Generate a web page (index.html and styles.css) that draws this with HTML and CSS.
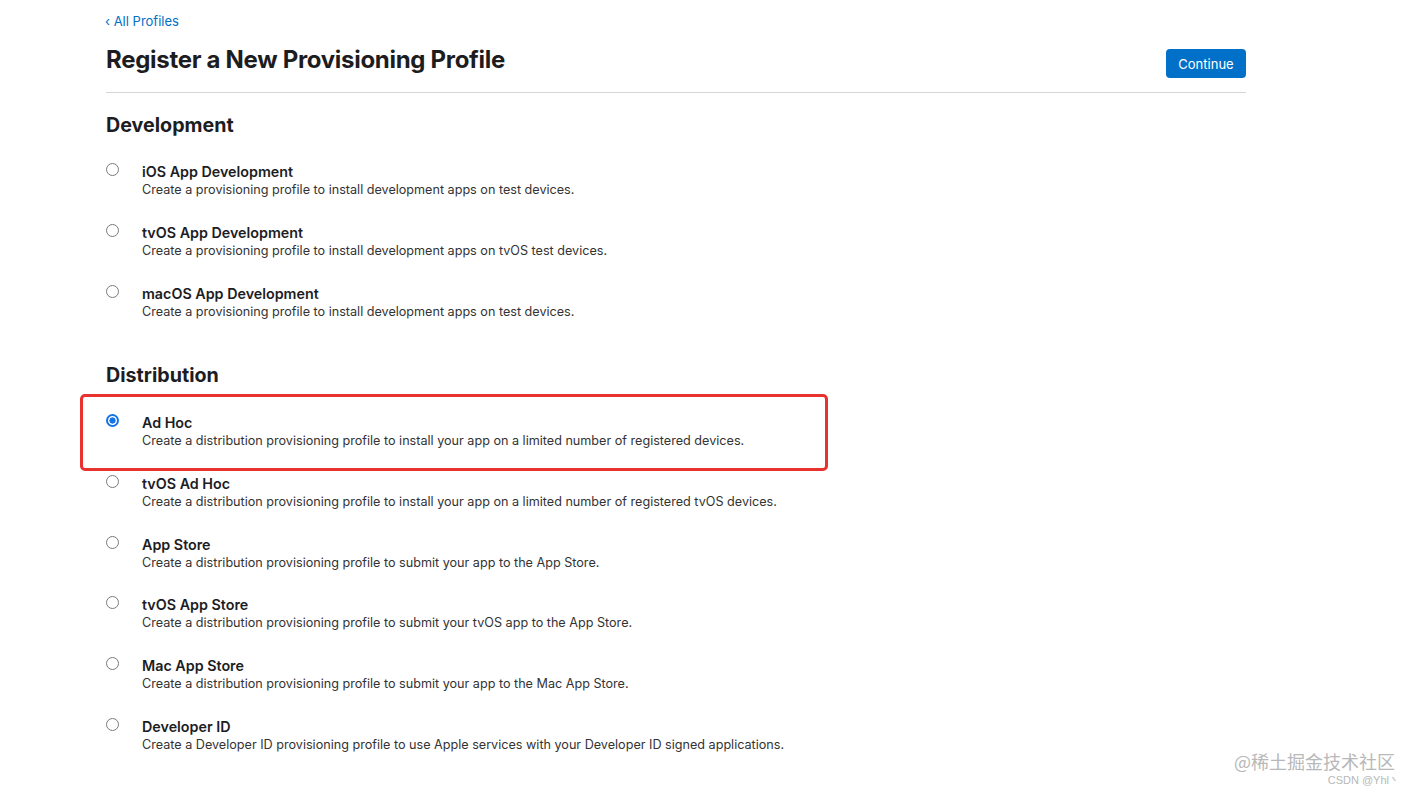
FILE: index.html
```html
<!DOCTYPE html>
<html>
<head>
<meta charset="utf-8">
<link rel="stylesheet" href="styles.css">
</head>
<body>
<div class="page">
  <a class="back" href="#">&lsaquo; All Profiles</a>
  <div class="header">
    <h1 class="title">Register a New Provisioning Profile</h1>
    <button class="btn">Continue</button>
  </div>

  <section class="section">
    <h2 class="sec-title">Development</h2>
    <div class="options">
      <div class="option">
        <span class="radio"></span>
        <div class="text">
          <div class="opt-title">iOS App Development</div>
          <div class="opt-desc">Create a provisioning profile to install development apps on test devices.</div>
        </div>
      </div>
      <div class="option">
        <span class="radio"></span>
        <div class="text">
          <div class="opt-title">tvOS App Development</div>
          <div class="opt-desc">Create a provisioning profile to install development apps on tvOS test devices.</div>
        </div>
      </div>
      <div class="option">
        <span class="radio"></span>
        <div class="text">
          <div class="opt-title">macOS App Development</div>
          <div class="opt-desc">Create a provisioning profile to install development apps on test devices.</div>
        </div>
      </div>
    </div>
  </section>

  <section class="section dist">
    <h2 class="sec-title">Distribution</h2>
    <div class="options">
      <div class="option highlighted">
        <span class="radio checked"></span>
        <div class="text">
          <div class="opt-title">Ad Hoc</div>
          <div class="opt-desc">Create a distribution provisioning profile to install your app on a limited number of registered devices.</div>
        </div>
        <span class="annot"></span>
      </div>
      <div class="option">
        <span class="radio"></span>
        <div class="text">
          <div class="opt-title">tvOS Ad Hoc</div>
          <div class="opt-desc">Create a distribution provisioning profile to install your app on a limited number of registered tvOS devices.</div>
        </div>
      </div>
      <div class="option">
        <span class="radio"></span>
        <div class="text">
          <div class="opt-title">App Store</div>
          <div class="opt-desc">Create a distribution provisioning profile to submit your app to the App Store.</div>
        </div>
      </div>
      <div class="option">
        <span class="radio"></span>
        <div class="text">
          <div class="opt-title">tvOS App Store</div>
          <div class="opt-desc">Create a distribution provisioning profile to submit your tvOS app to the App Store.</div>
        </div>
      </div>
      <div class="option">
        <span class="radio"></span>
        <div class="text">
          <div class="opt-title">Mac App Store</div>
          <div class="opt-desc">Create a distribution provisioning profile to submit your app to the Mac App Store.</div>
        </div>
      </div>
      <div class="option">
        <span class="radio"></span>
        <div class="text">
          <div class="opt-title">Developer ID</div>
          <div class="opt-desc">Create a Developer ID provisioning profile to use Apple services with your Developer ID signed applications.</div>
        </div>
      </div>
    </div>
  </section>
</div>

<div class="watermark">
  <div class="wm-main">@稀土掘金技术社区</div>
  <div class="wm-sub">CSDN @Yhl丶</div>
</div>
</body>
</html>
```

FILE: styles.css
```css
* { box-sizing: border-box; }
html, body { margin: 0; padding: 0; background: #fff; }
body {
  font-family: Inter, "Liberation Sans", Arial, sans-serif;
  color: #1d1d1f;
  height: 794px;
  overflow: hidden;
  position: relative;
}
.page {
  width: 1140px;
  margin-left: 106px;
  padding-top: 12px;
}
.back {
  display: block;
  font-size: 13px;
  line-height: 18px;
  color: #0070c9;
  text-decoration: none;
  margin-left: -1px;
}
.header {
  display: flex;
  justify-content: space-between;
  align-items: flex-start;
  margin-top: 15px;
  padding-bottom: 14px;
  border-bottom: 1px solid #d6d6d6;
}
.title {
  margin: 0;
  font-size: 24px;
  line-height: 30px;
  font-weight: 700;
  letter-spacing: -0.3px;
}
.btn {
  margin-top: 4px;
  height: 29px;
  width: 80px;
  border: 0;
  border-radius: 4px;
  background: #0070c9;
  color: #fff;
  font-family: inherit;
  font-size: 13px;
  padding: 0;
}
.section { margin-top: 20px; }
.section.dist { margin-top: 18px; }
.sec-title {
  margin: 0;
  font-size: 19.7px;
  line-height: 24px;
  font-weight: 700;
}
.options {
  margin-top: 25px;
  display: flex;
  flex-direction: column;
}
.dist .options { margin-top: 26px; }
.option {
  display: flex;
  align-items: flex-start;
  height: 61px;
  position: relative;
}
.dist .option { height: 60.8px; }
.radio {
  flex: none;
  width: 13px;
  height: 13px;
  margin-top: 1px;
  border-radius: 50%;
  border: 1px solid #7a7a7a;
  background: #fff;
}
.radio.checked {
  border: 2px solid #1473e6;
  background: radial-gradient(circle, #1473e6 0 2.8px, #fff 3.4px);
}
.text { margin-left: 23px; margin-top: 1px; }
.opt-title {
  font-size: 14.3px;
  line-height: 18px;
  font-weight: 600;
}
.opt-desc {
  font-size: 12.62px;
  line-height: 18px;
  color: #333;
}
.annot {
  position: absolute;
  left: -26px;
  top: -19px;
  width: 748px;
  height: 77px;
  border: 3px solid #e8322e;
  border-radius: 5px;
  pointer-events: none;
}
.watermark {
  position: absolute;
  right: 22px;
  bottom: 7px;
  text-align: right;
  color: #b8b8b8;
  font-family: "Noto Sans CJK SC", sans-serif;
}
.wm-main { font-size: 18px; line-height: 22px; }
.wm-sub {
  font-family: "Liberation Sans", Arial, sans-serif;
  font-size: 11px;
  line-height: 14px;
  margin-top: 1px;
  margin-right: -5px;
}
```
